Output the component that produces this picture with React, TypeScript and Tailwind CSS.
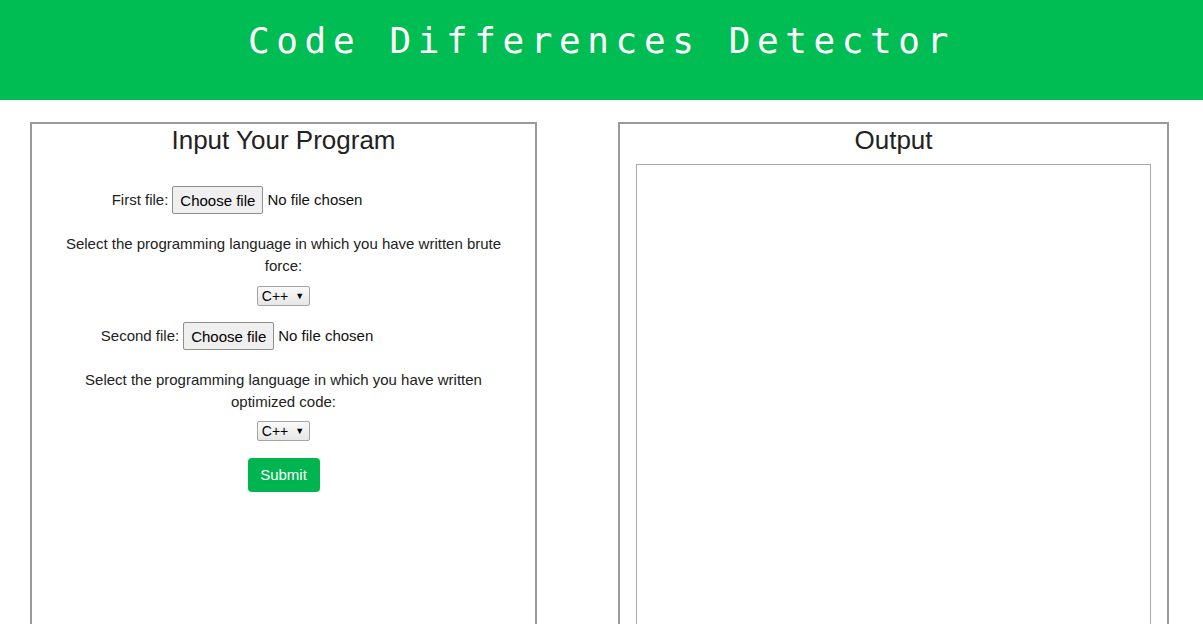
import React from "react";

function FileRow({ label }: { label: string }) {
  return (
    <div className="flex items-center justify-center gap-[4px] h-[28px]">
      <span>{label}</span>
      <div className="w-[283px] flex items-center gap-[4px]">
        <span className="inline-flex items-center h-[28px] px-[7px] border border-[#8f8f8f] rounded-[2px] bg-[#efefef] text-[15px] text-black leading-none">
          Choose file
        </span>
        <span className="text-[#111]">No file chosen</span>
      </div>
    </div>
  );
}

function LangSelect() {
  return (
    <div className="flex justify-center">
      <span className="inline-flex items-center h-[20px] pl-[4px] pr-[5px] gap-[7px] border border-[#a3a3a3] rounded-[2px] bg-[linear-gradient(#fafafa,#e6e6e6)] text-[14px] text-black leading-none">
        C++<span className="text-[9px]">▼</span>
      </span>
    </div>
  );
}

export default function App() {
  return (
    <div className="min-h-screen bg-white font-['Liberation_Sans',Arial,sans-serif] text-[#222] overflow-hidden h-[624px]">
      <header className="h-[100px] bg-[#00bd53] flex items-center justify-center">
        <h1 className="font-['DejaVu_Sans_Mono',monospace] text-[36px] tracking-[6.6px] text-white pb-[18px]">
          Code Differences Detector
        </h1>
      </header>

      <div className="flex pl-[30px] pt-[22px] gap-[81px]">
        <section className="w-[507px] h-[600px] border-2 border-[#9a9a9a] shrink-0">
          <h2 className="text-[26px] leading-[30px] text-center mt-[1px]">Input Your Program</h2>
          <div className="px-[20px] text-[15px] text-center">
            <div className="mt-[31px]">
              <FileRow label="First file:" />
            </div>
            <p className="mt-[19px] leading-[22px]">
              Select the programming language in which you have written brute force:
            </p>
            <div className="mt-[9px]">
              <LangSelect />
            </div>
            <div className="mt-[16px]">
              <FileRow label="Second file:" />
            </div>
            <p className="mt-[19px] leading-[22px] px-[20px]">
              Select the programming language in which you have written optimized code:
            </p>
            <div className="mt-[8px]">
              <LangSelect />
            </div>
            <div className="mt-[17px] flex justify-center">
              <button className="h-[34px] w-[72px] rounded-[4px] bg-[#00b54f] text-white text-[15px]">
                Submit
              </button>
            </div>
          </div>
        </section>

        <section className="w-[551px] h-[600px] border-2 border-[#9a9a9a] shrink-0">
          <h2 className="text-[26px] leading-[30px] text-center mt-[1px]">Output</h2>
          <div className="mx-[16px] mt-[9px] h-[500px] border border-[#aaaaaa]" />
        </section>
      </div>
    </div>
  );
}
